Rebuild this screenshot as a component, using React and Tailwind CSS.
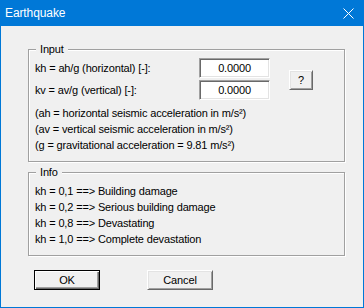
import React from "react";

const sunken =
  "border border-t-[#a0a0a0] border-l-[#a0a0a0] border-b-white border-r-white shadow-[inset_1px_1px_0_#696969,inset_-1px_-1px_0_#e3e3e3] bg-white";
const raised =
  "border border-t-white border-l-white border-b-[#696969] border-r-[#696969] shadow-[inset_1px_1px_0_#e3e3e3,inset_-1px_-1px_0_#a0a0a0] bg-[#f0f0f0]";
const group =
  "relative w-[317px] border border-[#a0a0a0] shadow-[inset_1px_1px_0_#fff,1px_1px_0_#fff]";

function Legend({ children }) {
  return (
    <div className="absolute left-[7px] top-[-9px] px-[4px] leading-[16px] bg-[#f0f0f0]">
      {children}
    </div>
  );
}

export default function App() {
  return (
    <div className="w-[364px] h-[308px] bg-[#f0f0f0] border border-t-0 border-[#0078d7] flex flex-col font-['Liberation_Sans',Arial,sans-serif] text-[11px] text-black tracking-[-0.15px]">
      <div className="h-[26px] shrink-0 bg-[#0078d7] flex items-center justify-between pl-[4px] pr-[9px]">
        <span className="text-white text-[12px] tracking-[-0.1px] leading-none">Earthquake</span>
        <svg width="11" height="11" viewBox="0 0 11 11" className="mt-[1px]">
          <path d="M0.5 0.5 L10.5 10.5 M10.5 0.5 L0.5 10.5" stroke="#fff" strokeWidth="1" />
        </svg>
      </div>
      <div className="pl-[27px] pt-[23px]">
        <div className={`${group} h-[113px] pl-[6px] pt-[8px]`}>
          <Legend>Input</Legend>
          <div className="flex items-start">
            <div className="flex flex-col gap-[2px]">
              <div className="flex items-center h-[20px]">
                <span className="w-[164px]">kh = ah/g (horizontal) [-]:</span>
                <div className={`${sunken} w-[71px] h-[20px] flex items-center justify-center`}>0.0000</div>
              </div>
              <div className="flex items-center h-[20px]">
                <span className="w-[164px]">kv = av/g (vertical) [-]:</span>
                <div className={`${sunken} w-[71px] h-[20px] flex items-center justify-center`}>0.0000</div>
              </div>
            </div>
            <div className={`${raised} ml-[19px] mt-[12px] w-[24px] h-[20px] flex items-center justify-center`}>?</div>
          </div>
          <div className="mt-[5px] leading-[16px]">
            <div>(ah = horizontal seismic acceleration in m/s²)</div>
            <div>(av = vertical seismic acceleration in m/s²)</div>
            <div>(g = gravitational acceleration = 9.81 m/s²)</div>
          </div>
        </div>
        <div className={`${group} mt-[10px] h-[84px] pl-[6px] pt-[10px] leading-[16px]`}>
          <Legend>Info</Legend>
          <div>kh = 0,1 ==&gt; Building damage</div>
          <div>kh = 0,2 ==&gt; Serious building damage</div>
          <div>kh = 0,8 ==&gt; Devastating</div>
          <div>kh = 1,0 ==&gt; Complete devastation</div>
        </div>
        <div className="mt-[14px] ml-[6px] flex gap-[47px]">
          <div className="w-[66px] h-[20px] border border-black shadow-[inset_1px_1px_0_#fff,inset_-1px_-1px_0_#696969,inset_-2px_-2px_0_#a0a0a0] bg-[#f0f0f0] flex items-center justify-center">
            OK
          </div>
          <div className={`${raised} w-[66px] h-[20px] flex items-center justify-center`}>Cancel</div>
        </div>
      </div>
    </div>
  );
}
